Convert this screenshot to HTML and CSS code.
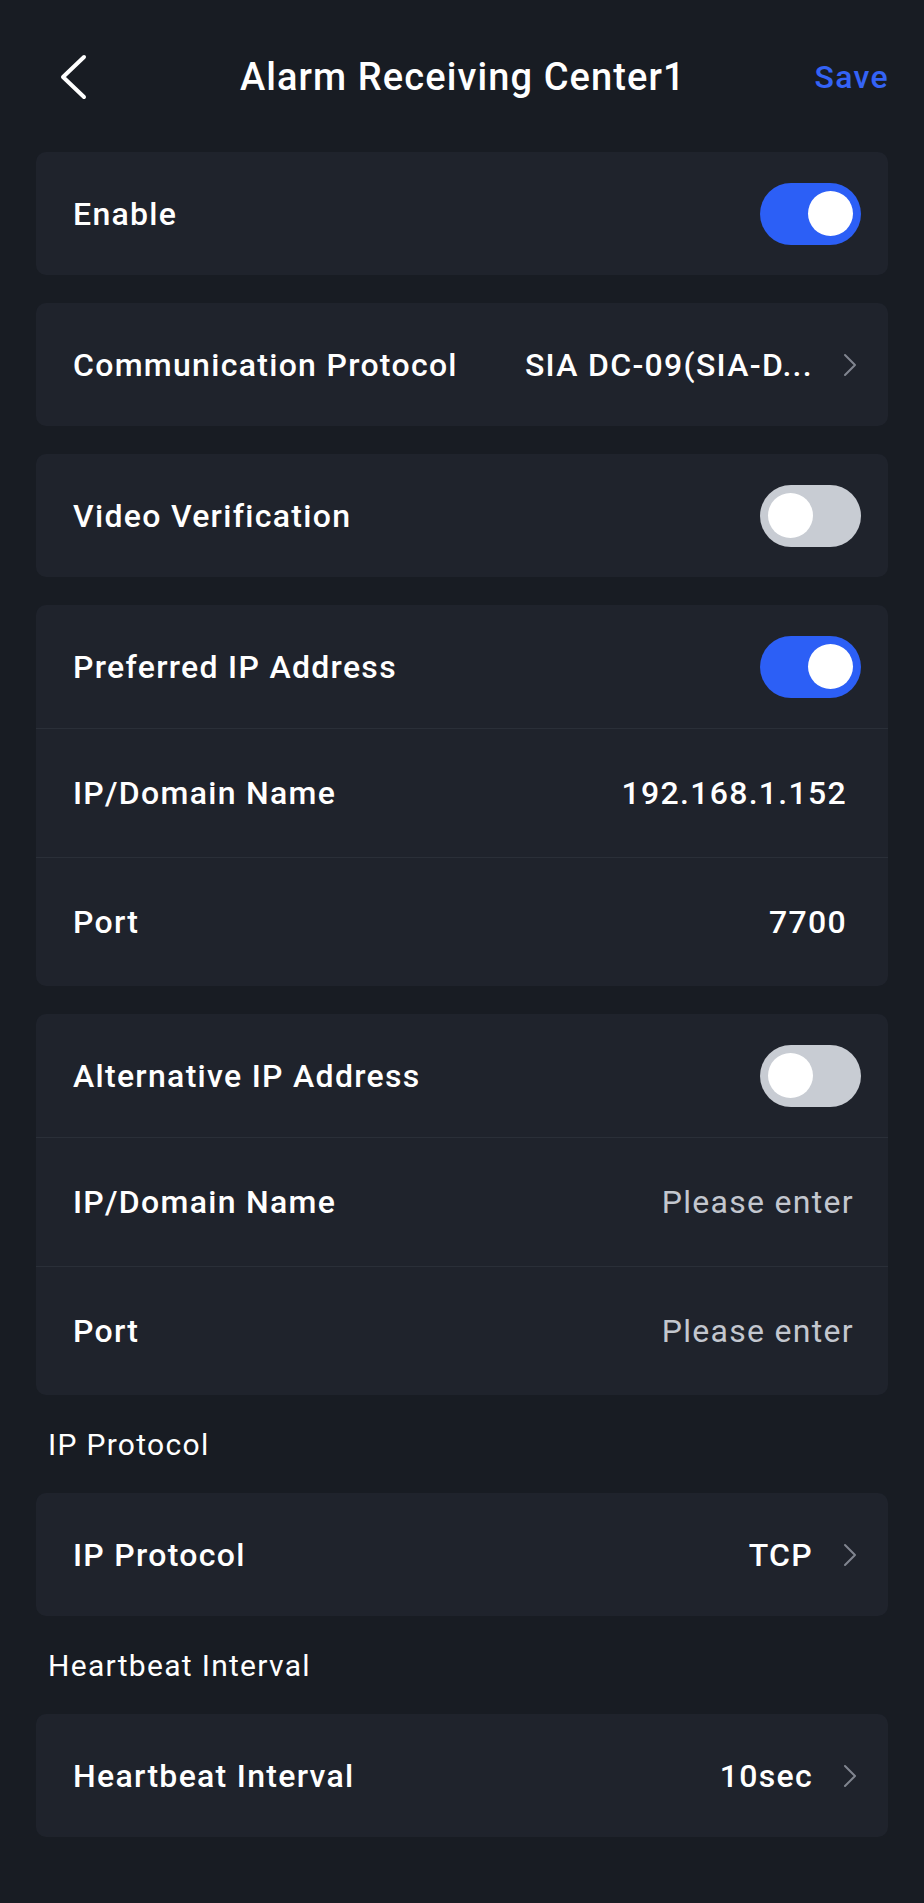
FILE: index.html
```html
<!DOCTYPE html>
<html lang="en">
<head>
  <meta charset="UTF-8">
  <meta name="viewport" content="width=device-width, initial-scale=1.0">
  <title>Alarm Receiving Center1</title>
  <link rel="stylesheet" href="styles.css">
</head>
<body>

  <header class="topbar">
    <button class="back" aria-label="Back">
      <svg width="30" height="48" viewBox="0 0 30 48"><path d="M25 4 L4 24 L25 44" fill="none" stroke="#fff" stroke-width="4" stroke-linecap="round" stroke-linejoin="round"/></svg>
    </button>
    <h1 class="title">Alarm Receiving Center1</h1>
    <button class="save">Save</button>
  </header>

  <main class="content">
    <div class="card">
      <div class="row">
        <span class="label">Enable</span>
        <span class="toggle on"></span>
      </div>
    </div>

    <div class="card">
      <div class="row">
        <span class="label">Communication Protocol</span>
        <span class="value linked">SIA DC-09(SIA-D...</span>
        <svg class="chevron" width="14" height="24" viewBox="0 0 14 24"><path d="M2 2 L12 12 L2 22" fill="none" stroke="#80858f" stroke-width="2" stroke-linecap="round" stroke-linejoin="round"/></svg>
      </div>
    </div>

    <div class="card">
      <div class="row">
        <span class="label">Video Verification</span>
        <span class="toggle"></span>
      </div>
    </div>

    <div class="card">
      <div class="row">
        <span class="label">Preferred IP Address</span>
        <span class="toggle on"></span>
      </div>
      <div class="row tall">
        <span class="label">IP/Domain Name</span>
        <span class="value">192.168.1.152</span>
      </div>
      <div class="row tall">
        <span class="label">Port</span>
        <span class="value">7700</span>
      </div>
    </div>

    <div class="card">
      <div class="row">
        <span class="label">Alternative IP Address</span>
        <span class="toggle"></span>
      </div>
      <div class="row tall">
        <span class="label">IP/Domain Name</span>
        <span class="placeholder">Please enter</span>
      </div>
      <div class="row tall">
        <span class="label">Port</span>
        <span class="placeholder">Please enter</span>
      </div>
    </div>

    <p class="section">IP Protocol</p>
    <div class="card">
      <div class="row">
        <span class="label">IP Protocol</span>
        <span class="value linked">TCP</span>
        <svg class="chevron" width="14" height="24" viewBox="0 0 14 24"><path d="M2 2 L12 12 L2 22" fill="none" stroke="#80858f" stroke-width="2" stroke-linecap="round" stroke-linejoin="round"/></svg>
      </div>
    </div>

    <p class="section">Heartbeat Interval</p>
    <div class="card">
      <div class="row">
        <span class="label">Heartbeat Interval</span>
        <span class="value linked">10sec</span>
        <svg class="chevron" width="14" height="24" viewBox="0 0 14 24"><path d="M2 2 L12 12 L2 22" fill="none" stroke="#80858f" stroke-width="2" stroke-linecap="round" stroke-linejoin="round"/></svg>
      </div>
    </div>
  </main>

</body>
</html>
```

FILE: styles.css
```css
/* Reset */
* {
  margin: 0;
  padding: 0;
  box-sizing: border-box;
}

body {
  font-family: Roboto, 'Liberation Sans', sans-serif;
  letter-spacing: 1.3px;
  background-color: #181c23;
  color: #fff;
  min-height: 100vh;
}

button {
  background: none;
  border: 0;
  font: inherit;
  letter-spacing: inherit;
  color: inherit;
}

/* Top bar */
.topbar {
  height: 126px;
  padding: 28px 35px 0 59px;
  display: flex;
  align-items: center;
  justify-content: space-between;
}

.back {
  width: 30px;
  height: 48px;
  display: flex;
}

.title {
  font-size: 38px;
  font-weight: 500;
  letter-spacing: 1.1px;
  margin-left: 22px;
}

.save {
  font-size: 32px;
  font-weight: 500;
  color: #3463f6;
}

/* Cards */
.content {
  padding: 26px 36px 64px;
  display: flex;
  flex-direction: column;
  gap: 28px;
}

.card {
  background-color: #1f232c;
  border-radius: 10px;
}

.row {
  height: 123px;
  display: flex;
  align-items: center;
  padding: 0 27px 0 37px;
}

.row.tall {
  height: 129px;
  border-top: 1px solid #2a2f38;
}

.label {
  flex: 1;
  font-size: 32px;
  font-weight: 500;
}

.value {
  font-size: 32px;
  font-weight: 500;
  margin-right: 14px;
}

.value.linked {
  margin-right: 30px;
}

.placeholder {
  font-size: 32px;
  color: #c3c7cf;
  margin-right: 7px;
}

.chevron {
  margin-right: 4px;
}

/* Switch */
.toggle {
  width: 101px;
  height: 62px;
  border-radius: 31px;
  background-color: #c8ccd3;
  padding: 8px;
  display: flex;
  justify-content: flex-start;
  align-items: center;
}

.toggle::after {
  content: "";
  width: 45px;
  height: 45px;
  border-radius: 50%;
  background-color: #fff;
}

.toggle.on {
  background-color: #2c5ff6;
  justify-content: flex-end;
}

/* Section titles */
.section {
  font-size: 30px;
  line-height: 36px;
  padding-left: 12px;
  margin: 4px 0 2px;
}
```
